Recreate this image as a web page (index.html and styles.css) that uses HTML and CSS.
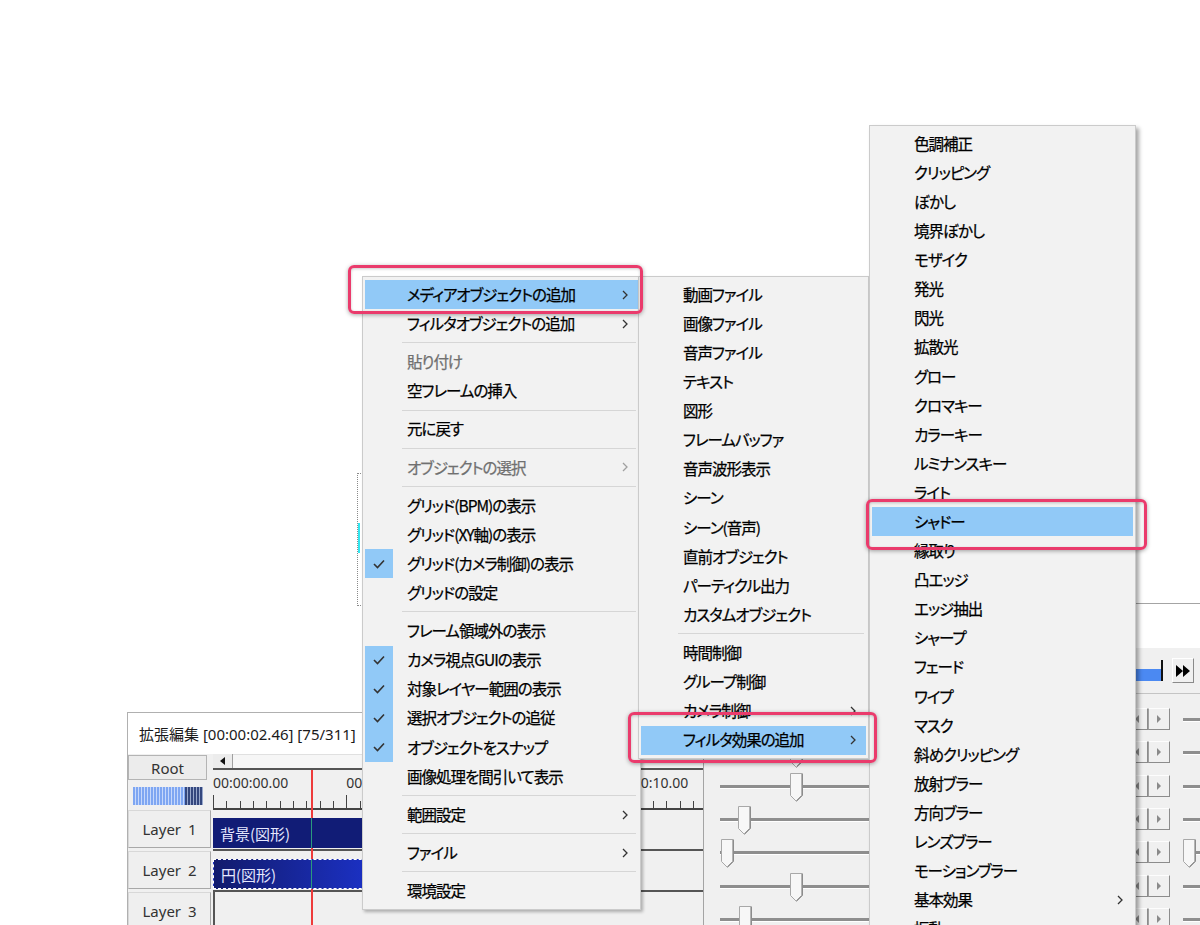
FILE: index.html
```html
<!DOCTYPE html>
<html lang="ja">
<head>
<meta charset="utf-8">
<title>AviUtl menu</title>
<link rel="stylesheet" href="styles.css">
</head>
<body>
<div class="desk">

  <!-- timeline window -->
  <div class="win timeline">
    <div class="titlebar">拡張編集 [00:00:02.46] [75/311]</div>
    <div class="tl-body">
      <div class="tl-heads">
        <div class="root-btn">Root</div>
        <div class="meter"><span class="meter-lt"></span><span class="meter-dk"></span></div>
        <div class="layer-btn first">Layer 1</div>
        <div class="layer-btn">Layer 2</div>
        <div class="layer-btn">Layer 3</div>
      </div>
      <div class="tl-main">
        <div class="hscroll">
          <span class="sb-btn"><svg width="5" height="8" viewBox="0 0 5 8"><path d="M5 0V8L0 4Z" fill="#111"/></svg></span>
          <span class="sb-track"></span>
        </div>
        <div class="ruler">
          <div class="rlabels"><span>00:00:00.00</span><span>00:00:03.33</span><span class="hidden-lbl"></span><span>00:00:10.00</span></div>
        </div>
        <div class="track"><div class="obj obj-bg"><span class="ph"></span>背景(図形)</div></div>
        <div class="track"><div class="obj obj-sel"><span class="ph"></span>円(図形)</div></div>
        <div class="track empty"></div>
        <div class="playhead"></div>
      </div>
    </div>
  </div>

  <!-- settings window -->
  <div class="win settings">
    <div class="s-title"></div>
    <div class="s-play">
      <div class="seek"><div class="seek-fill"></div></div>
      <div class="ffbtn"><svg width="16" height="12" viewBox="0 0 16 12"><path d="M1 0L8 6L1 12Z M8 0L15 6L8 12Z" fill="#000"/></svg></div>
    </div>
    <div class="s-rows">
      <div class="srow">
        <div class="slider"><div class="track-line"></div><svg class="thumb" style="left:70px" width="13" height="29" viewBox="0 0 13 29"><path d="M0.5 0.5H12.5V22.5L6.5 28.5L0.5 22.5Z" fill="#f7f7f7" stroke="#a8a8a8"/><path d="M12 1V22.3L6.5 27.8" fill="none" stroke="#707070"/></svg></div>
        <div class="btn2"><span class="sbtn"><svg width="4" height="8" viewBox="0 0 4 8"><path d="M4 0V8L0 4Z" fill="#8a8a8a"/></svg></span><span class="sbtn"><svg width="4" height="8" viewBox="0 0 4 8"><path d="M0 0V8L4 4Z" fill="#8a8a8a"/></svg></span></div>
        <div class="slider r"><div class="track-line"></div></div>
      </div>
      <div class="srow">
        <div class="slider"><div class="track-line"></div><svg class="thumb" style="left:70px" width="13" height="29" viewBox="0 0 13 29"><path d="M0.5 0.5H12.5V22.5L6.5 28.5L0.5 22.5Z" fill="#f7f7f7" stroke="#a8a8a8"/><path d="M12 1V22.3L6.5 27.8" fill="none" stroke="#707070"/></svg></div>
        <div class="btn2"><span class="sbtn"><svg width="4" height="8" viewBox="0 0 4 8"><path d="M4 0V8L0 4Z" fill="#8a8a8a"/></svg></span><span class="sbtn"><svg width="4" height="8" viewBox="0 0 4 8"><path d="M0 0V8L4 4Z" fill="#8a8a8a"/></svg></span></div>
        <div class="slider r"><div class="track-line"></div></div>
      </div>
      <div class="srow">
        <div class="slider"><div class="track-line"></div><svg class="thumb" style="left:70px" width="13" height="29" viewBox="0 0 13 29"><path d="M0.5 0.5H12.5V22.5L6.5 28.5L0.5 22.5Z" fill="#f7f7f7" stroke="#a8a8a8"/><path d="M12 1V22.3L6.5 27.8" fill="none" stroke="#707070"/></svg></div>
        <div class="btn2"><span class="sbtn"><svg width="4" height="8" viewBox="0 0 4 8"><path d="M4 0V8L0 4Z" fill="#8a8a8a"/></svg></span><span class="sbtn"><svg width="4" height="8" viewBox="0 0 4 8"><path d="M0 0V8L4 4Z" fill="#8a8a8a"/></svg></span></div>
        <div class="slider r"><div class="track-line"></div></div>
      </div>
      <div class="srow">
        <div class="slider"><div class="track-line"></div><svg class="thumb" style="left:18px" width="13" height="29" viewBox="0 0 13 29"><path d="M0.5 0.5H12.5V22.5L6.5 28.5L0.5 22.5Z" fill="#f7f7f7" stroke="#a8a8a8"/><path d="M12 1V22.3L6.5 27.8" fill="none" stroke="#707070"/></svg></div>
        <div class="btn2"><span class="sbtn"><svg width="4" height="8" viewBox="0 0 4 8"><path d="M4 0V8L0 4Z" fill="#8a8a8a"/></svg></span><span class="sbtn"><svg width="4" height="8" viewBox="0 0 4 8"><path d="M0 0V8L4 4Z" fill="#8a8a8a"/></svg></span></div>
        <div class="slider r"><div class="track-line"></div></div>
      </div>
      <div class="srow">
        <div class="slider"><div class="track-line"></div><svg class="thumb" style="left:1px" width="13" height="29" viewBox="0 0 13 29"><path d="M0.5 0.5H12.5V22.5L6.5 28.5L0.5 22.5Z" fill="#f7f7f7" stroke="#a8a8a8"/><path d="M12 1V22.3L6.5 27.8" fill="none" stroke="#707070"/></svg></div>
        <div class="btn2"><span class="sbtn"><svg width="4" height="8" viewBox="0 0 4 8"><path d="M4 0V8L0 4Z" fill="#8a8a8a"/></svg></span><span class="sbtn"><svg width="4" height="8" viewBox="0 0 4 8"><path d="M0 0V8L4 4Z" fill="#8a8a8a"/></svg></span></div>
        <div class="slider r"><div class="track-line"></div><svg class="thumb" style="left:0px" width="13" height="29" viewBox="0 0 13 29"><path d="M0.5 0.5H12.5V22.5L6.5 28.5L0.5 22.5Z" fill="#f7f7f7" stroke="#a8a8a8"/><path d="M12 1V22.3L6.5 27.8" fill="none" stroke="#707070"/></svg></div>
      </div>
      <div class="srow">
        <div class="slider"><div class="track-line"></div><svg class="thumb" style="left:70px" width="13" height="29" viewBox="0 0 13 29"><path d="M0.5 0.5H12.5V22.5L6.5 28.5L0.5 22.5Z" fill="#f7f7f7" stroke="#a8a8a8"/><path d="M12 1V22.3L6.5 27.8" fill="none" stroke="#707070"/></svg></div>
        <div class="btn2"><span class="sbtn"><svg width="4" height="8" viewBox="0 0 4 8"><path d="M4 0V8L0 4Z" fill="#8a8a8a"/></svg></span><span class="sbtn"><svg width="4" height="8" viewBox="0 0 4 8"><path d="M0 0V8L4 4Z" fill="#8a8a8a"/></svg></span></div>
        <div class="slider r"><div class="track-line"></div></div>
      </div>
      <div class="srow">
        <div class="slider"><div class="track-line"></div><svg class="thumb" style="left:19px" width="13" height="29" viewBox="0 0 13 29"><path d="M0.5 0.5H12.5V22.5L6.5 28.5L0.5 22.5Z" fill="#f7f7f7" stroke="#a8a8a8"/><path d="M12 1V22.3L6.5 27.8" fill="none" stroke="#707070"/></svg></div>
        <div class="btn2"><span class="sbtn"><svg width="4" height="8" viewBox="0 0 4 8"><path d="M4 0V8L0 4Z" fill="#8a8a8a"/></svg></span><span class="sbtn"><svg width="4" height="8" viewBox="0 0 4 8"><path d="M0 0V8L4 4Z" fill="#8a8a8a"/></svg></span></div>
        <div class="slider r"><div class="track-line"></div></div>
      </div>
    </div>
  </div>

  <!-- dotted frame of the preview -->
  <div class="sel-rect"><span class="cyan"></span></div>

  <!-- main context menu -->
  <div class="menu m1">
    <div class="item hl"><span class="gut"></span><span class="lbl">メディアオブジェクトの追加</span><svg class="arr" width="6" height="10" viewBox="0 0 6 10"><path d="M1 1L5 5L1 9" fill="none" stroke="#333" stroke-width="1.3"/></svg></div>
    <div class="item"><span class="gut"></span><span class="lbl">フィルタオブジェクトの追加</span><svg class="arr" width="6" height="10" viewBox="0 0 6 10"><path d="M1 1L5 5L1 9" fill="none" stroke="#333" stroke-width="1.3"/></svg></div>
    <div class="sep"></div>
    <div class="item dis"><span class="gut"></span><span class="lbl">貼り付け</span></div>
    <div class="item"><span class="gut"></span><span class="lbl">空フレームの挿入</span></div>
    <div class="sep"></div>
    <div class="item"><span class="gut"></span><span class="lbl">元に戻す</span></div>
    <div class="sep"></div>
    <div class="item dis"><span class="gut"></span><span class="lbl">オブジェクトの選択</span><svg class="arr" width="6" height="10" viewBox="0 0 6 10"><path d="M1 1L5 5L1 9" fill="none" stroke="#a0a0a0" stroke-width="1.3"/></svg></div>
    <div class="sep"></div>
    <div class="item"><span class="gut"></span><span class="lbl">グリッド(BPM)の表示</span></div>
    <div class="item"><span class="gut"></span><span class="lbl">グリッド(XY軸)の表示</span></div>
    <div class="item"><span class="gut"><span class="chk"><svg width="12" height="10" viewBox="0 0 12 10"><path d="M1 5L4.5 8.5L11 1.5" fill="none" stroke="#333" stroke-width="1.6"/></svg></span></span><span class="lbl">グリッド(カメラ制御)の表示</span></div>
    <div class="item"><span class="gut"></span><span class="lbl">グリッドの設定</span></div>
    <div class="sep"></div>
    <div class="item"><span class="gut"></span><span class="lbl">フレーム領域外の表示</span></div>
    <div class="item"><span class="gut"><span class="chk"><svg width="12" height="10" viewBox="0 0 12 10"><path d="M1 5L4.5 8.5L11 1.5" fill="none" stroke="#333" stroke-width="1.6"/></svg></span></span><span class="lbl">カメラ視点GUIの表示</span></div>
    <div class="item"><span class="gut"><span class="chk"><svg width="12" height="10" viewBox="0 0 12 10"><path d="M1 5L4.5 8.5L11 1.5" fill="none" stroke="#333" stroke-width="1.6"/></svg></span></span><span class="lbl">対象レイヤー範囲の表示</span></div>
    <div class="item"><span class="gut"><span class="chk"><svg width="12" height="10" viewBox="0 0 12 10"><path d="M1 5L4.5 8.5L11 1.5" fill="none" stroke="#333" stroke-width="1.6"/></svg></span></span><span class="lbl">選択オブジェクトの追従</span></div>
    <div class="item"><span class="gut"><span class="chk"><svg width="12" height="10" viewBox="0 0 12 10"><path d="M1 5L4.5 8.5L11 1.5" fill="none" stroke="#333" stroke-width="1.6"/></svg></span></span><span class="lbl">オブジェクトをスナップ</span></div>
    <div class="item"><span class="gut"></span><span class="lbl">画像処理を間引いて表示</span></div>
    <div class="sep"></div>
    <div class="item"><span class="gut"></span><span class="lbl">範囲設定</span><svg class="arr" width="6" height="10" viewBox="0 0 6 10"><path d="M1 1L5 5L1 9" fill="none" stroke="#333" stroke-width="1.3"/></svg></div>
    <div class="sep"></div>
    <div class="item"><span class="gut"></span><span class="lbl">ファイル</span><svg class="arr" width="6" height="10" viewBox="0 0 6 10"><path d="M1 1L5 5L1 9" fill="none" stroke="#333" stroke-width="1.3"/></svg></div>
    <div class="sep"></div>
    <div class="item"><span class="gut"></span><span class="lbl">環境設定</span></div>
  </div>

  <!-- media object submenu -->
  <div class="menu m2">
    <div class="item"><span class="gut"></span><span class="lbl">動画ファイル</span></div>
    <div class="item"><span class="gut"></span><span class="lbl">画像ファイル</span></div>
    <div class="item"><span class="gut"></span><span class="lbl">音声ファイル</span></div>
    <div class="item"><span class="gut"></span><span class="lbl">テキスト</span></div>
    <div class="item"><span class="gut"></span><span class="lbl">図形</span></div>
    <div class="item"><span class="gut"></span><span class="lbl">フレームバッファ</span></div>
    <div class="item"><span class="gut"></span><span class="lbl">音声波形表示</span></div>
    <div class="item"><span class="gut"></span><span class="lbl">シーン</span></div>
    <div class="item"><span class="gut"></span><span class="lbl">シーン(音声)</span></div>
    <div class="item"><span class="gut"></span><span class="lbl">直前オブジェクト</span></div>
    <div class="item"><span class="gut"></span><span class="lbl">パーティクル出力</span></div>
    <div class="item"><span class="gut"></span><span class="lbl">カスタムオブジェクト</span></div>
    <div class="sep"></div>
    <div class="item"><span class="gut"></span><span class="lbl">時間制御</span></div>
    <div class="item"><span class="gut"></span><span class="lbl">グループ制御</span></div>
    <div class="item"><span class="gut"></span><span class="lbl">カメラ制御</span><svg class="arr" width="6" height="10" viewBox="0 0 6 10"><path d="M1 1L5 5L1 9" fill="none" stroke="#333" stroke-width="1.3"/></svg></div>
    <div class="item hl"><span class="gut"></span><span class="lbl">フィルタ効果の追加</span><svg class="arr" width="6" height="10" viewBox="0 0 6 10"><path d="M1 1L5 5L1 9" fill="none" stroke="#333" stroke-width="1.3"/></svg></div>
  </div>

  <!-- filter effect submenu -->
  <div class="menu m3">
    <div class="item"><span class="gut"></span><span class="lbl">色調補正</span></div>
    <div class="item"><span class="gut"></span><span class="lbl">クリッピング</span></div>
    <div class="item"><span class="gut"></span><span class="lbl">ぼかし</span></div>
    <div class="item"><span class="gut"></span><span class="lbl">境界ぼかし</span></div>
    <div class="item"><span class="gut"></span><span class="lbl">モザイク</span></div>
    <div class="item"><span class="gut"></span><span class="lbl">発光</span></div>
    <div class="item"><span class="gut"></span><span class="lbl">閃光</span></div>
    <div class="item"><span class="gut"></span><span class="lbl">拡散光</span></div>
    <div class="item"><span class="gut"></span><span class="lbl">グロー</span></div>
    <div class="item"><span class="gut"></span><span class="lbl">クロマキー</span></div>
    <div class="item"><span class="gut"></span><span class="lbl">カラーキー</span></div>
    <div class="item"><span class="gut"></span><span class="lbl">ルミナンスキー</span></div>
    <div class="item"><span class="gut"></span><span class="lbl">ライト</span></div>
    <div class="item hl"><span class="gut"></span><span class="lbl">シャドー</span></div>
    <div class="item"><span class="gut"></span><span class="lbl">縁取り</span></div>
    <div class="item"><span class="gut"></span><span class="lbl">凸エッジ</span></div>
    <div class="item"><span class="gut"></span><span class="lbl">エッジ抽出</span></div>
    <div class="item"><span class="gut"></span><span class="lbl">シャープ</span></div>
    <div class="item"><span class="gut"></span><span class="lbl">フェード</span></div>
    <div class="item"><span class="gut"></span><span class="lbl">ワイプ</span></div>
    <div class="item"><span class="gut"></span><span class="lbl">マスク</span></div>
    <div class="item"><span class="gut"></span><span class="lbl">斜めクリッピング</span></div>
    <div class="item"><span class="gut"></span><span class="lbl">放射ブラー</span></div>
    <div class="item"><span class="gut"></span><span class="lbl">方向ブラー</span></div>
    <div class="item"><span class="gut"></span><span class="lbl">レンズブラー</span></div>
    <div class="item"><span class="gut"></span><span class="lbl">モーションブラー</span></div>
    <div class="item"><span class="gut"></span><span class="lbl">基本効果</span><svg class="arr" width="6" height="10" viewBox="0 0 6 10"><path d="M1 1L5 5L1 9" fill="none" stroke="#333" stroke-width="1.3"/></svg></div>
    <div class="item"><span class="gut"></span><span class="lbl">振動</span></div>
  </div>

  <!-- red annotation boxes -->
  <div class="mark mk1"></div>
  <div class="mark mk2"></div>
  <div class="mark mk3"></div>
</div>
</body>
</html>
```

FILE: styles.css
```css
* { box-sizing: border-box; margin: 0; padding: 0; }
html, body { width: 1200px; height: 925px; overflow: hidden; background: #fff; }
body { font-family: "Noto Sans CJK JP", "Noto Sans", sans-serif; color: #000; }
.desk { position: relative; width: 1200px; height: 925px; overflow: hidden; background: #fff; }

/* ---------- windows ---------- */
.win { position: absolute; z-index: 0; background: #f0f0f0; border: 1px solid #b0b0b0; }

.timeline { left: 127px; top: 712px; width: 585px; height: 240px; display: flex; flex-direction: column; }
.titlebar {
  height: 41px; flex: none; background: #fff; padding-left: 11px;
  display: flex; align-items: center;
  font-family: "Noto Sans", "Noto Sans CJK JP", sans-serif; font-size: 15px; color: #1a1a1a;
}
.tl-body { flex: 1; display: flex; }
.tl-heads { width: 85px; flex: none; display: flex; flex-direction: column; }
.root-btn {
  margin-top: 1px; width: 79px; height: 25px; border: 1px solid #b4b4b4; background: #ececec;
  display: flex; align-items: center; justify-content: center;
  font-family: "Noto Sans", sans-serif; font-size: 15px; color: #333;
}
.meter { display: flex; width: 70px; height: 18px; margin: 7px 0 0 5px; }
.meter-lt { flex: 1; background: repeating-linear-gradient(to right, #7ea6f2 0 2px, #c6d8fb 2px 3px); }
.meter-dk { width: 18px; background: repeating-linear-gradient(to right, #34477e 0 2px, #98a8cc 2px 3px); }
.layer-btn {
  margin-top: 3px; width: 83px; height: 38px; background: #efefef;
  border: 1px solid #a8a8a8; border-top-color: #d8d8d8; border-left-color: #d8d8d8;
  display: flex; align-items: center; justify-content: center;
  font-family: "Noto Sans", sans-serif; font-size: 15px; color: #333; word-spacing: 3px;
}
.layer-btn.first { margin-top: 5px; }

.tl-main { flex: 1; position: relative; display: flex; flex-direction: column; }
.hscroll { height: 16px; flex: none; display: flex; border-bottom: 2px solid #555; background: #f6f6f6; }
.sb-btn { width: 20px; height: 14px; background: #ececec; border-right: 1px solid #a0a0a0; display: flex; align-items: center; justify-content: center; }
.sb-track { flex: 1; border-top: 1px solid #e0e0e0; }
.ruler {
  height: 40px; flex: none; padding-top: 6px;
  background:
    linear-gradient(#444, #444) left bottom / 100% 2px no-repeat,
    repeating-linear-gradient(to right, #444 0 1px, transparent 1px 13.333px) left bottom 2px / 100% 7px no-repeat,
    repeating-linear-gradient(to right, #444 0 1px, transparent 1px 133.333px) left bottom 2px / 100% 13px no-repeat,
    #f0f0f0;
}
.rlabels { display: flex; }
.rlabels span { width: 133.333px; height: 14px; flex: none; font-family: "Noto Sans", sans-serif; font-size: 14px; line-height: 14px; color: #333; }
.track { height: 41px; flex: none; border-bottom: 2px solid #555; padding-top: 8px; }
.track.empty { border-left: 2px solid #555; }
.obj {
  position: relative; z-index: 1; width: 410px; height: 30px;
  display: flex; align-items: center; padding-left: 7px;
  font-family: "Noto Sans CJK JP", sans-serif; font-size: 15px; color: #e6e8ff;
}
.obj-bg { background: #111c76; }
.obj-sel { background: linear-gradient(to right, #121b6c 0, #1b30c2 150px, #1b30c2 100%); border: 1px dashed #fff; }
.ph { position: absolute; left: 98px; top: 0; bottom: 0; width: 1px; background: #2a9a7e; }
.obj-sel .ph { left: 97px; }
.playhead { position: absolute; left: 98px; top: 16px; bottom: 0; width: 1.5px; background: #ee3b3b; }

.settings { left: 703px; top: 603px; width: 520px; height: 340px; border-color: #a4a4a4; }
.s-title { height: 44px; background: #fff; }
.s-play { height: 46px; display: flex; align-items: center; border-bottom: 1px solid #c4c4c4; }
.seek { margin-left: 16px; width: 443px; height: 21px; border-right: 2px solid #111; display: flex; align-items: flex-end; }
.seek-fill { width: 100%; height: 12px; background: #4b89f2; }
.ffbtn {
  margin-left: 9px; width: 22px; height: 25px; background: #f0f0f0;
  border: 1px solid #8a8a8a; border-top-color: #fff; border-left-color: #fff;
  display: flex; align-items: center; justify-content: center;
}
.s-rows { padding-top: 14px; }
.srow { height: 33.333px; display: flex; align-items: flex-start; }
.slider { position: relative; margin-left: 16px; margin-top: -2px; width: 406px; height: 29px; flex: none; }
.slider.r { margin-left: 13px; width: 200px; }
.track-line { margin-top: 12px; height: 3px; background: #8e8e8e; box-shadow: 0 1px 0 #fff; }
.thumb { position: absolute; top: 0; }
.btn2 { display: flex; flex: none; }
.sbtn {
  width: 22px; height: 22px; background: #f0f0f0;
  border: 1px solid #8c8c8c; border-top-color: #fdfdfd; border-left-color: #a0a0a0;
  display: flex; align-items: center; justify-content: center;
}

.sel-rect { position: absolute; z-index: 1; left: 357px; top: 473px; width: 40px; height: 133px; border: 1px dotted #8a8a8a; border-right: none; }
.cyan { position: absolute; left: 0; top: 49px; width: 2px; height: 30px; background: #33e6f0; }

/* ---------- menus ---------- */
.menu {
  position: absolute; z-index: 5; background: #f2f2f2; border: 1px solid #cbcbcb; padding: 3px 2px;
  box-shadow: 2px 2px 3px rgba(0, 0, 0, 0.28);
  font-size: 15.5px; font-feature-settings: "palt"; letter-spacing: -1px; line-height: 1;
  -webkit-text-stroke: 0.25px currentColor;
}
.m1 { left: 362px; top: 276px; width: 279px; }
.m2 { left: 638px; top: 276px; width: 231px; }
.m3 { left: 869px; top: 125px; width: 267px; box-shadow: 3px 3px 4px rgba(0, 0, 0, 0.35); }

.item { height: 29.1px; display: flex; align-items: center; white-space: nowrap; }
.item.hl { background: #91c9f7; }
.item.dis { color: #707070; }
.gut { width: 42px; height: 100%; flex: none; display: flex; }
.chk { width: 28px; height: 100%; background: #91c9f7; display: flex; align-items: center; justify-content: center; }
.lbl { display: block; }
.arr { margin-left: auto; margin-right: 10px; flex: none; }
.sep { height: 9.1px; display: flex; align-items: center; padding: 0 2px 0 37px; }
.sep::after { content: ""; flex: 1; height: 1px; background: #d6d6d6; }

/* ---------- annotation ---------- */
.mark {
  position: absolute; z-index: 6; border: 3px solid #ea3b6c; border-radius: 6px;
  box-shadow: 0 1px 4px rgba(0, 0, 0, 0.35), inset 0 1px 3px rgba(0, 0, 0, 0.2);
}
.mk1 { left: 348px; top: 265px; width: 295px; height: 49px; }
.mk2 { left: 628px; top: 712px; width: 249px; height: 51px; }
.mk3 { left: 866px; top: 499px; width: 281px; height: 51px; }
```
